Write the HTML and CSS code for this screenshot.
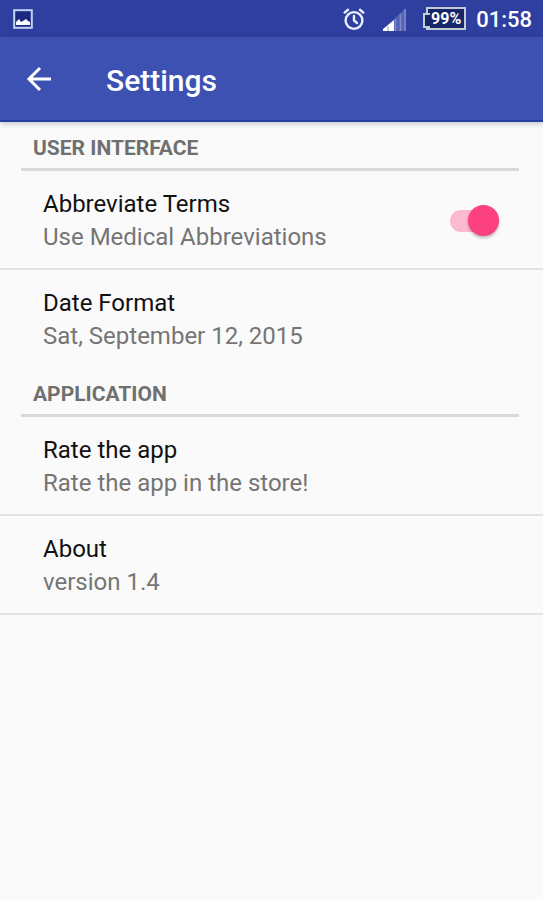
FILE: index.html
```html
<!DOCTYPE html>
<html lang="en">
<head>
<meta charset="utf-8">
<meta name="viewport" content="width=device-width, initial-scale=1">
<title>Settings</title>
<link rel="stylesheet" href="styles.css">
</head>
<body>
<div class="status-bar">
  <svg class="icon-picture" width="20" height="20" viewBox="0 0 20 20" role="img" aria-label="Picture saved">
    <rect x="1.2" y="1.2" width="17.6" height="17.6" fill="#1b2a80" stroke="#c3d4f3" stroke-width="2"/>
    <path d="M3 16v-3l3-3 2 3 2-1 3-2 2 2 2 1v3z" fill="#fff"/>
  </svg>
  <div class="status-right">
    <svg class="icon-alarm" width="24" height="24" viewBox="0 0 24 24" role="img" aria-label="Alarm set" fill="none" stroke="#e9effc" stroke-width="2.4" stroke-linecap="round">
      <circle cx="12" cy="13.5" r="8.4"/>
      <path d="M12 9v4.5l3 2.5M2.6 5.6 6 2.8M21.4 5.6 18 2.8"/>
    </svg>
    <svg class="icon-signal" width="24" height="24" viewBox="0 0 24 24" role="img" aria-label="Signal strength">
      <path d="M0 24v-2l11-9v11z" fill="#fff"/>
      <path d="M5 19v5" stroke="#8f9ad6"/>
      <path d="M11 24V12l12-11v23z" fill="#5462b4"/>
      <path d="M12.500 12v12M17.500 7v17M22 2v22" stroke="#7e8bcd" stroke-width="1.5"/>
    </svg>
    <span class="battery">99%</span>
    <span class="clock">01:58</span>
  </div>
</div>
<header class="app-bar">
  <button class="back" type="button" aria-label="Back">
    <svg width="26" height="26" viewBox="0 0 26 26" fill="none" stroke="#fff" stroke-width="3">
      <path d="M25 13H3M14 2 3 13l11 11"/>
    </svg>
  </button>
  <h1 class="title">Settings</h1>
</header>
<main>
  <section class="group">
    <h2 class="group-title">USER INTERFACE</h2>
    <label class="row">
      <span class="row-text">
        <span class="name">Abbreviate Terms</span>
        <span class="summary">Use Medical Abbreviations</span>
      </span>
      <input class="switch" type="checkbox" role="switch" checked>
    </label>
    <a class="row" href="#date-format">
      <span class="row-text">
        <span class="name">Date Format</span>
        <span class="summary">Sat, September 12, 2015</span>
      </span>
    </a>
  </section>
  <section class="group ruled">
    <h2 class="group-title">APPLICATION</h2>
    <a class="row" href="#rate">
      <span class="row-text">
        <span class="name">Rate the app</span>
        <span class="summary">Rate the app in the store!</span>
      </span>
    </a>
    <a class="row" href="#about">
      <span class="row-text">
        <span class="name">About</span>
        <span class="summary">version 1.4</span>
      </span>
    </a>
  </section>
</main>
</body>
</html>
```
FILE: styles.css
```css
* {
  box-sizing: border-box;
}

body {
  margin: 0;
  min-height: 100vh;
  background: #fafafa;
  font-family: Roboto, "Liberation Sans", sans-serif;
}

.status-bar {
  display: flex;
  align-items: center;
  justify-content: space-between;
  height: 37px;
  padding: 0 11px 0 13px;
  background: #2f3f9f;
  color: #fff;
}

.status-right {
  display: flex;
  align-items: center;
}

.icon-signal {
  margin: 0 19px 0 17px;
}

.battery {
  position: relative;
  width: 40px;
  height: 23px;
  border: 2px solid #c3cdd6;
  background: #182568;
  font-size: 16px;
  font-weight: 700;
  line-height: 20px;
  text-align: center;
}

.battery::before {
  content: "";
  position: absolute;
  left: -5px;
  top: 4px;
  width: 5px;
  height: 11px;
  border: 2px solid #c3cdd6;
  border-right: 0;
  background: #182568;
}

.clock {
  margin-left: 10px;
  padding-top: 2px;
  font-size: 22px;
  font-weight: 500;
  line-height: 35px;
}

.app-bar {
  display: flex;
  align-items: center;
  height: 85px;
  padding: 0 26px;
  border-bottom: 2px solid #2540a0;
  background: #3d51b3;
  box-shadow: 0 2px 6px rgba(0, 0, 0, 0.2);
  color: #fff;
}

.back {
  display: flex;
  margin-right: 54px;
  padding: 0;
  border: 0;
  background: none;
}

.title {
  margin: 0;
  padding-top: 4px;
  font-size: 30px;
  font-weight: 500;
  line-height: 40px;
}

.group + .group {
  margin-top: 1px;
}

.group-title {
  margin: 0 24px 0 21px;
  padding: 10px 12px 4px;
  border-bottom: 3px solid #d9d9d9;
  color: #707070;
  font-size: 21px;
  font-weight: 700;
  line-height: 32px;
}

.row {
  display: flex;
  align-items: center;
  justify-content: space-between;
  padding: 17px 45px 14px 43px;
  color: inherit;
  text-decoration: none;
}

.row + .row {
  border-top: 2px solid #e2e2e2;
}

.ruled {
  border-bottom: 2px solid #e2e2e2;
}

.name,
.summary {
  display: block;
  font-size: 24px;
  line-height: 33px;
}

.name {
  color: #111;
}

.summary {
  color: #757575;
}

.switch {
  position: relative;
  appearance: none;
  width: 48px;
  height: 22px;
  margin: 0;
  border-radius: 11px;
  background: #fdb9d0;
}

.switch::before {
  content: "";
  position: absolute;
  top: -5px;
  left: 0;
  width: 31px;
  height: 31px;
  border-radius: 50%;
  background: #fff;
  box-shadow: 0 2px 3px rgba(0, 0, 0, 0.25);
}

.switch:checked::before {
  left: 18px;
  background: #fc4080;
}
```
